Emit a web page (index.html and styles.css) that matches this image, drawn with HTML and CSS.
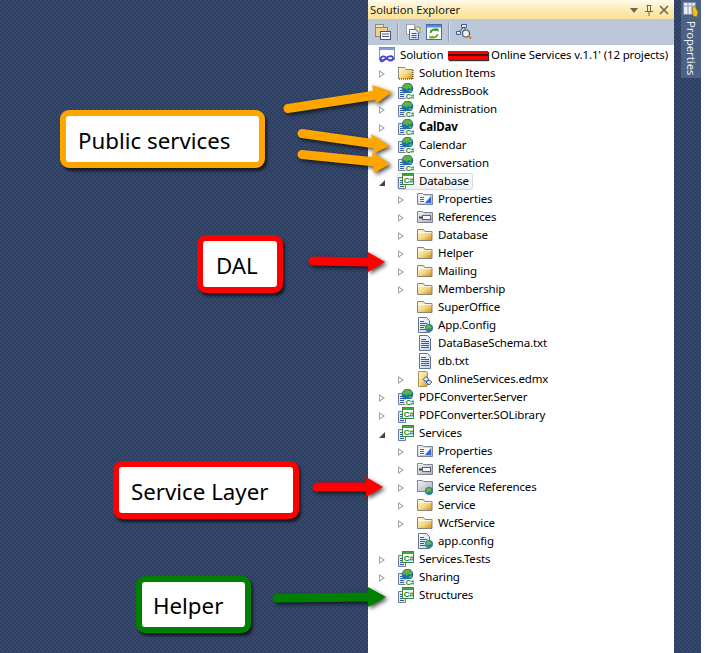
FILE: index.html
```html
<!DOCTYPE html>
<html lang="en">
<head>
<meta charset="utf-8">
<title>Solution Explorer</title>
<link rel="stylesheet" href="styles.css">
</head>
<body>
<svg class="defs" width="0" height="0" aria-hidden="true">
  <defs>
    <linearGradient id="fold" x1="0" y1="0" x2="1" y2="1"><stop offset="0" stop-color="#fffbe0"/><stop offset=".55" stop-color="#f6d67e"/><stop offset="1" stop-color="#c98a1c"/></linearGradient>
    <linearGradient id="page" x1="0" y1="0" x2="1" y2="1"><stop offset="0" stop-color="#fff"/><stop offset="1" stop-color="#c3d2ea"/></linearGradient>
    <linearGradient id="grey" x1="0" y1="0" x2="1" y2="1"><stop offset="0" stop-color="#f4f4f6"/><stop offset="1" stop-color="#a9adb8"/></linearGradient>
    <symbol id="folder" viewBox="0 0 16 16"><path d="M.5 2.500h6l1.500 2h7v9h-14.500z" fill="url(#fold)" stroke="#85847a"/><path d="M1.500 5.500h13" stroke="#fff" stroke-opacity=".7"/></symbol>
    <symbol id="items" viewBox="0 0 16 16"><path d="M.5 2.500h6l1.500 2h7v9.500h-14.500z" fill="url(#fold)"/><path d="M.5 2.500h6l1.500 2h7v9.500h-14.500z" fill="none" stroke="#222" stroke-dasharray="1 1"/></symbol>
    <symbol id="doc" viewBox="0 0 16 16"><path d="M2.500 .5h8l3 3v12h-11z" fill="url(#page)" stroke="#5f7299"/><path d="M4 4.500h5M4 6.500h8M4 8.500h8M4 10.500h8M4 12.500h8" stroke="#2f5ea8"/></symbol>
    <symbol id="config" viewBox="0 0 16 16"><path d="M1.500 .5h8l3 3v12h-11z" fill="url(#page)" stroke="#5f7299"/><path d="M3 4.500h4M3 6.500h7M3 8.500h5M3 10.500h4M3 12.500h5" stroke="#2f5ea8"/><circle cx="12" cy="11" r="4" fill="#2b7f8f"/><path d="M10 8.500l3-.5 1.500 2.500-2 1.500-1-1-1.500 2-1-2z" fill="#6dbb3c"/></symbol>
    <symbol id="props" viewBox="0 0 16 16"><path d="M.5 2.500h5l1 1h9v10h-15z" fill="url(#grey)" stroke="#7f8594"/><rect x="2" y="5" width="12" height="7" fill="#f6f8fc"/><path d="M3 6.500h4M3 8.500h4M3 10.500h4" stroke="#2d66c4"/><path d="M14 5v7H8z" fill="#2f69cf"/></symbol>
    <symbol id="refs" viewBox="0 0 16 16"><path d="M.5 2.500h5l1 1h9v10h-15z" fill="url(#grey)" stroke="#7f8594"/><rect x="5.500" y="6.500" width="8" height="4" fill="#fbfbfd" stroke="#5c6270"/><path d="M2 8.500h3" stroke="#444" stroke-width="2"/></symbol>
    <symbol id="svcref" viewBox="0 0 16 16"><path d="M.5 1.500h5l1 1h9v10h-15z" fill="url(#grey)" stroke="#7f8594"/><circle cx="12" cy="12" r="4" fill="#2b7f8f"/><path d="M10 9.500l3-.5 1.500 2.500-2 1.500-1-1-1.500 2-1-2z" fill="#6dbb3c"/></symbol>
    <symbol id="edmx" viewBox="0 0 16 16"><path d="M1.500 .5h8l1 1v13l-1 1h-8z" fill="url(#fold)" stroke="#a8934a"/><path d="M6 8.500l3-3 3 3-3 2zM9 11l3 3 3-3-3-2z" fill="#dfe6f2" stroke="#3460a8"/></symbol>
    <symbol id="cs" viewBox="0 0 16 16"><path d="M.5 4.500h7v11h-7z" fill="#e3e8f2" stroke="#6c7c99"/><path d="M2 7.500h4M2 9.500h4M2 11.500h4M2 13.500h4" stroke="#2f5ea8"/><rect x="4.500" y=".5" width="11" height="11" fill="#fff" stroke="#3a8a3a"/><rect x="5" y="1" width="10" height="2" fill="#38a83f"/><text x="5.800" y="10.300" class="glyph-cs">C#</text></symbol>
    <symbol id="csweb" viewBox="0 0 16 16"><path d="M.5 4.500h8v11h-8z" fill="#e3e8f2" stroke="#6c7c99"/><path d="M2 7.500h4M2 9.500h4M2 11.500h4M2 13.500h4" stroke="#2f5ea8"/><circle cx="9.500" cy="5.500" r="5.800" fill="#1f6fa8"/><path d="M6 1.500c3-2 6-1 8 1.500l-1 3-3-1-1 2-2-2-3 1z" fill="#5fb33a"/><path d="M11 7l3 0-1 2-2 0z" fill="#5fb33a"/><rect x="7.500" y="10" width="8.500" height="6" fill="#fff"/><text x="7.800" y="15.800" class="glyph-web">C#</text></symbol>
    <symbol id="sln" viewBox="0 0 16 16"><rect x=".5" y=".5" width="15" height="12" fill="#fdfdff" stroke="#7f8fb0"/><rect x="1" y="1" width="14" height="2" fill="#7f9fd8"/><path d="M1.500 13c0-4.500 4-4.500 6-2s5 4 6.500 1c1-3-3.500-4-6.500-1s-6 4.500-6 2z" fill="none" stroke="#4a3fd6" stroke-width="1.800"/></symbol>
  </defs>
</svg>

<div class="desk">
  <div class="bench"></div>

  <section class="explorer">
    <header class="titlebar">
      <span class="title">Solution Explorer</span>
      <span class="win-btns">
        <svg class="win-ico" viewBox="0 0 12 12"><path d="M2 4h8l-4 5z" fill="#67675a"/></svg>
        <svg class="win-ico" viewBox="0 0 12 12"><path d="M3.500 1.500h5M4.500 1.500v6M7.500 1.500v6M2 7.500h8M6 8v4" stroke="#67675a" fill="none"/></svg>
        <svg class="win-ico" viewBox="0 0 12 12"><path d="M2 2l8 8M10 2l-8 8" stroke="#67675a" stroke-width="1.600"/></svg>
      </span>
    </header>
    <div class="toolbar">
      <svg class="tool" viewBox="0 0 16 16"><path d="M.5 .5h8v3h-8z" fill="#efe4b8" stroke="#8a8a80"/><rect x=".5" y="3.500" width="12" height="9" fill="#eed48a" stroke="#8a8a80"/><rect x="5.500" y="7.500" width="10" height="8" fill="#fff" stroke="#555"/><path d="M7 10h7M7 12.500h7" stroke="#3b5f9e"/></svg>
      <i class="tool-sep"></i>
      <svg class="tool" viewBox="0 0 16 16"><path d="M1.500 .5h8v10h-8z" fill="#fff" stroke="#666" stroke-dasharray="1 1"/><path d="M10 3h5v6h-4z" fill="#eed48a" stroke="#8a7a40" stroke-width=".6"/><path d="M4.500 5.500h6l3 3v7h-9z" fill="url(#page)" stroke="#4a6aa5"/><path d="M6.500 9.500h5M6.500 11.500h5M6.500 13.500h5" stroke="#3b5f9e"/></svg>
      <svg class="tool tool-refresh" viewBox="0 0 16 16"><rect x=".5" y=".5" width="15" height="15" fill="#fdfdf4" stroke="#4a6aa5"/><rect x="1" y="1" width="14" height="2.500" fill="#4d8fd8"/><path d="M4.500 9a3.500 3.500 0 0 1 6-2.400" fill="none" stroke="#2f8f2f" stroke-width="1.800"/><path d="M9 4.500h3.500V8z" fill="#2f8f2f"/><path d="M11.500 10a3.500 3.500 0 0 1-6 2.400" fill="none" stroke="#5aae2a" stroke-width="1.800"/><path d="M7 14.500H3.500V11z" fill="#5aae2a"/></svg>
      <i class="tool-sep"></i>
      <svg class="tool" viewBox="0 0 16 16"><path d="M5.500 .5h5v3h-5zM.5 7.500h4v3h-4z" fill="#e3e8f2" stroke="#3f5f9a"/><path d="M7 4L3 7.500M9 4v2" stroke="#3f5f9a"/><circle cx="10" cy="9.500" r="3.500" fill="#eef2f8" stroke="#555" stroke-width="1.200"/><path d="M12.500 12L15 14.500" stroke="#d4851a" stroke-width="2.400"/></svg>
    </div>

    <div class="tree">
      <div class="row row-sln"><svg class="ico"><use href="#sln"/></svg><span class="lbl">Solution <b class="redact"></b> Online Services v.1.1' (12 projects)</span></div>

      <div class="row lv1"><i class="tw"></i><svg class="ico"><use href="#items"/></svg><span class="lbl">Solution Items</span></div>
      <div class="row lv1"><i class="tw none"></i><svg class="ico"><use href="#csweb"/></svg><span class="lbl">AddressBook</span></div>
      <div class="row lv1"><i class="tw"></i><svg class="ico"><use href="#csweb"/></svg><span class="lbl">Administration</span></div>
      <div class="row lv1"><i class="tw"></i><svg class="ico"><use href="#csweb"/></svg><span class="lbl bold">CalDav</span></div>
      <div class="row lv1"><i class="tw"></i><svg class="ico"><use href="#csweb"/></svg><span class="lbl">Calendar</span></div>
      <div class="row lv1"><i class="tw"></i><svg class="ico"><use href="#csweb"/></svg><span class="lbl">Conversation</span></div>
      <div class="row lv1"><i class="tw open"></i><div class="selected"><svg class="ico"><use href="#cs"/></svg><span class="lbl">Database</span></div></div>

      <div class="row lv2"><i class="tw"></i><svg class="ico"><use href="#props"/></svg><span class="lbl">Properties</span></div>
      <div class="row lv2"><i class="tw"></i><svg class="ico"><use href="#refs"/></svg><span class="lbl">References</span></div>
      <div class="row lv2"><i class="tw"></i><svg class="ico"><use href="#folder"/></svg><span class="lbl">Database</span></div>
      <div class="row lv2"><i class="tw"></i><svg class="ico"><use href="#folder"/></svg><span class="lbl">Helper</span></div>
      <div class="row lv2"><i class="tw"></i><svg class="ico"><use href="#folder"/></svg><span class="lbl">Mailing</span></div>
      <div class="row lv2"><i class="tw"></i><svg class="ico"><use href="#folder"/></svg><span class="lbl">Membership</span></div>
      <div class="row lv2"><i class="tw none"></i><svg class="ico"><use href="#folder"/></svg><span class="lbl">SuperOffice</span></div>
      <div class="row lv2"><i class="tw none"></i><svg class="ico"><use href="#config"/></svg><span class="lbl">App.Config</span></div>
      <div class="row lv2"><i class="tw none"></i><svg class="ico"><use href="#doc"/></svg><span class="lbl">DataBaseSchema.txt</span></div>
      <div class="row lv2"><i class="tw none"></i><svg class="ico"><use href="#doc"/></svg><span class="lbl">db.txt</span></div>
      <div class="row lv2"><i class="tw"></i><svg class="ico"><use href="#edmx"/></svg><span class="lbl">OnlineServices.edmx</span></div>

      <div class="row lv1"><i class="tw"></i><svg class="ico"><use href="#csweb"/></svg><span class="lbl">PDFConverter.Server</span></div>
      <div class="row lv1"><i class="tw"></i><svg class="ico"><use href="#cs"/></svg><span class="lbl">PDFConverter.SOLibrary</span></div>
      <div class="row lv1"><i class="tw open"></i><svg class="ico"><use href="#cs"/></svg><span class="lbl">Services</span></div>

      <div class="row lv2"><i class="tw"></i><svg class="ico"><use href="#props"/></svg><span class="lbl">Properties</span></div>
      <div class="row lv2"><i class="tw"></i><svg class="ico"><use href="#refs"/></svg><span class="lbl">References</span></div>
      <div class="row lv2"><i class="tw"></i><svg class="ico"><use href="#svcref"/></svg><span class="lbl">Service References</span></div>
      <div class="row lv2"><i class="tw"></i><svg class="ico"><use href="#folder"/></svg><span class="lbl">Service</span></div>
      <div class="row lv2"><i class="tw"></i><svg class="ico"><use href="#folder"/></svg><span class="lbl">WcfService</span></div>
      <div class="row lv2"><i class="tw none"></i><svg class="ico"><use href="#config"/></svg><span class="lbl">app.config</span></div>

      <div class="row lv1"><i class="tw"></i><svg class="ico"><use href="#cs"/></svg><span class="lbl">Services.Tests</span></div>
      <div class="row lv1"><i class="tw"></i><svg class="ico"><use href="#csweb"/></svg><span class="lbl">Sharing</span></div>
      <div class="row lv1"><i class="tw none"></i><svg class="ico"><use href="#cs"/></svg><span class="lbl">Structures</span></div>
    </div>
  </section>

  <aside class="dock">
    <div class="dock-tab">
      <svg class="dock-ico" viewBox="0 0 16 16"><rect x=".5" y=".5" width="12" height="12" fill="#e9edf5" stroke="#7b8aa5"/><path d="M1 4h11M5 1v11M9 1v11" stroke="#8fa0c0"/><path d="M9 6l3-2 3 6-1 5-4-1z" fill="#f0c020" stroke="#7a5c10" stroke-width=".6"/></svg>
      <span class="dock-label">Properties</span>
    </div>
  </aside>
  <div class="edge"></div>

  <div class="note note-orange note-public">Public services</div>
  <div class="note note-red note-dal">DAL</div>
  <div class="note note-red note-service">Service Layer</div>
  <div class="note note-green note-helper">Helper</div>

  <svg class="arrows" width="707" height="653" viewBox="0 0 707 653" aria-hidden="true">
    <g class="a-orange">
      <path class="shaft" d="M288 108.500L376 95"/><path d="M372 85L392 92L376 104z"/>
      <path class="shaft" d="M302 133.500L376 144"/><path d="M371 134L390 146L374 153z"/>
      <path class="shaft" d="M302 154.500L376 162"/><path d="M372 152L390 164L374 173z"/>
    </g>
    <g class="a-red">
      <path class="shaft" d="M313 261L372 262"/><path d="M368 252L385 262L368 272z"/>
      <path class="shaft" d="M317 487L370 487"/><path d="M366 477L383 487L366 497z"/>
    </g>
    <g class="a-green">
      <path class="shaft" d="M277 598L372 597"/><path d="M368 587L386 597L368 607z"/>
    </g>
  </svg>
</div>
</body>
</html>
```

FILE: styles.css
```css
* { box-sizing: border-box; }
html, body { margin: 0; padding: 0; background: #fff; }
.defs { position: absolute; }
.desk {
  position: relative;
  width: 707px;
  height: 653px;
  overflow: hidden;
  display: flex;
  background-color: #2e4062;
  background-image:
    radial-gradient(circle at 1px 1px, #36496d 1px, transparent 1.2px),
    radial-gradient(circle at 3px 3px, #36496d 1px, transparent 1.2px);
  background-size: 4px 4px;
  font-family: "Noto Sans", "Open Sans", sans-serif;
}
.bench { width: 368px; flex: none; }

.explorer { width: 306px; flex: none; display: flex; flex-direction: column; background: #fff; color: #000; }
.titlebar {
  height: 19px; flex: none;
  display: flex; align-items: center; justify-content: space-between;
  padding: 0 4px 0 2px;
  border-radius: 3px 3px 0 0;
  background: linear-gradient(#fffcec, #fdeab0 55%, #fbe29c);
}
.title { font-size: 11.2px; line-height: 19px; color: #1a1a1a; }
.win-btns { display: flex; gap: 3px; }
.win-ico { width: 12px; height: 12px; display: block; }
.toolbar {
  height: 26px; flex: none;
  display: flex; align-items: center; gap: 6px;
  padding: 0 7px;
  background: #bcc7d8;
}
.tool { width: 16px; height: 16px; display: block; }
.tool-refresh { margin-left: -1px; }
.tool-sep { width: 2px; height: 18px; background: #8f9bb0; border-right: 1px solid #d8dfe9; }

.tree { flex: 1; padding-top: 1px; font-size: 11.5px; letter-spacing: -.14px; overflow: hidden; }
.row { height: 18px; display: flex; align-items: center; white-space: nowrap; }
.row-sln { padding-left: 11px; }
.lv1 { padding-left: 11px; }
.lv2 { padding-left: 30px; }
.ico { width: 16px; height: 16px; flex: none; margin-right: 5px; }
.lbl { margin-bottom: 2px; }
.tw { width: 19px; height: 9px; flex: none; position: relative; margin-top: 2px; }
.tw::before {
  content: ""; position: absolute; left: 0; top: 0;
  border-left: 6px solid #a6a6a6; border-top: 4.500px solid transparent; border-bottom: 4.500px solid transparent;
}
.tw::after {
  content: ""; position: absolute; left: 1px; top: 2px;
  border-left: 3.500px solid #fff; border-top: 2.500px solid transparent; border-bottom: 2.500px solid transparent;
}
.tw.none::before, .tw.none::after { display: none; }
.tw.open::after { display: none; }
.tw.open::before {
  left: 0; top: 2px;
  border-left: 6px solid transparent; border-right: 0; border-top: 0; border-bottom: 6px solid #444;
}
.bold { font-weight: 700; }
.selected {
  display: flex; align-items: center;
  height: 17px; margin-left: -1px; padding-right: 3px;
  border: 1px solid #d9d9d9; border-radius: 3px;
  background: linear-gradient(#fcfcfc, #f1f1f1);
}
.redact {
  display: inline-block; width: 40px; height: 9px; margin: 0 0 0 2px; vertical-align: -1px;
  background: linear-gradient(#f00 3px, #4a1010 3px, #4a1010 5px, #f00 5px);
  box-shadow: 1px 1px 1px #333;
}

.dock { width: 27px; flex: none; padding-left: 7px; }
.dock-tab {
  width: 20px; height: 78px;
  display: flex; flex-direction: column; align-items: center; gap: 3px;
  background: #4d6184; color: #eef1f7;
}
.dock-ico { width: 16px; height: 16px; flex: none; margin-top: 2px; }
.dock-label { writing-mode: vertical-rl; font-size: 11.2px; line-height: 18px; }
.edge { width: 6px; flex: none; background: #fff; }

.note {
  position: absolute;
  display: flex; align-items: center;
  padding-top: 5px;
  background: #fff; color: #000;
  border: 6px solid; border-radius: 9px;
  box-shadow: 2px 3px 3px rgba(0, 0, 0, .65);
  font-size: 22.3px; line-height: 1;
}
.note-orange { border-color: #ffa500; }
.note-red { border-color: #f00; }
.note-green { border-color: #008000; }
.note-public { left: 60px; top: 110px; width: 205px; height: 58px; padding-left: 12px; }
.note-dal { left: 197px; top: 235px; width: 86px; height: 58px; padding-left: 13px; }
.note-service { left: 113px; top: 461px; width: 186px; height: 58px; padding-left: 12px; }
.note-helper { left: 136px; top: 576px; width: 115px; height: 57px; padding-left: 11px; padding-top: 3px; }

.arrows { position: absolute; left: 0; top: 0; pointer-events: none; filter: drop-shadow(2px 2px 2px rgba(0, 0, 0, .7)); }
.shaft { fill: none; stroke-width: 9; stroke-linecap: round; }
.a-orange { fill: #ffa500; }
.a-orange .shaft { stroke: #ffa500; }
.a-red { fill: #f00; }
.a-red .shaft { stroke: #f00; }
.a-green { fill: #008000; }
.a-green .shaft { stroke: #008000; }
.glyph-cs { font-family: "Liberation Sans", sans-serif; font-size: 8px; font-weight: 700; letter-spacing: -.3px; fill: #14802a; }
.glyph-web { font-family: "Liberation Sans", sans-serif; font-size: 7.200px; font-weight: 700; letter-spacing: -.3px; fill: #14802a; }
```
